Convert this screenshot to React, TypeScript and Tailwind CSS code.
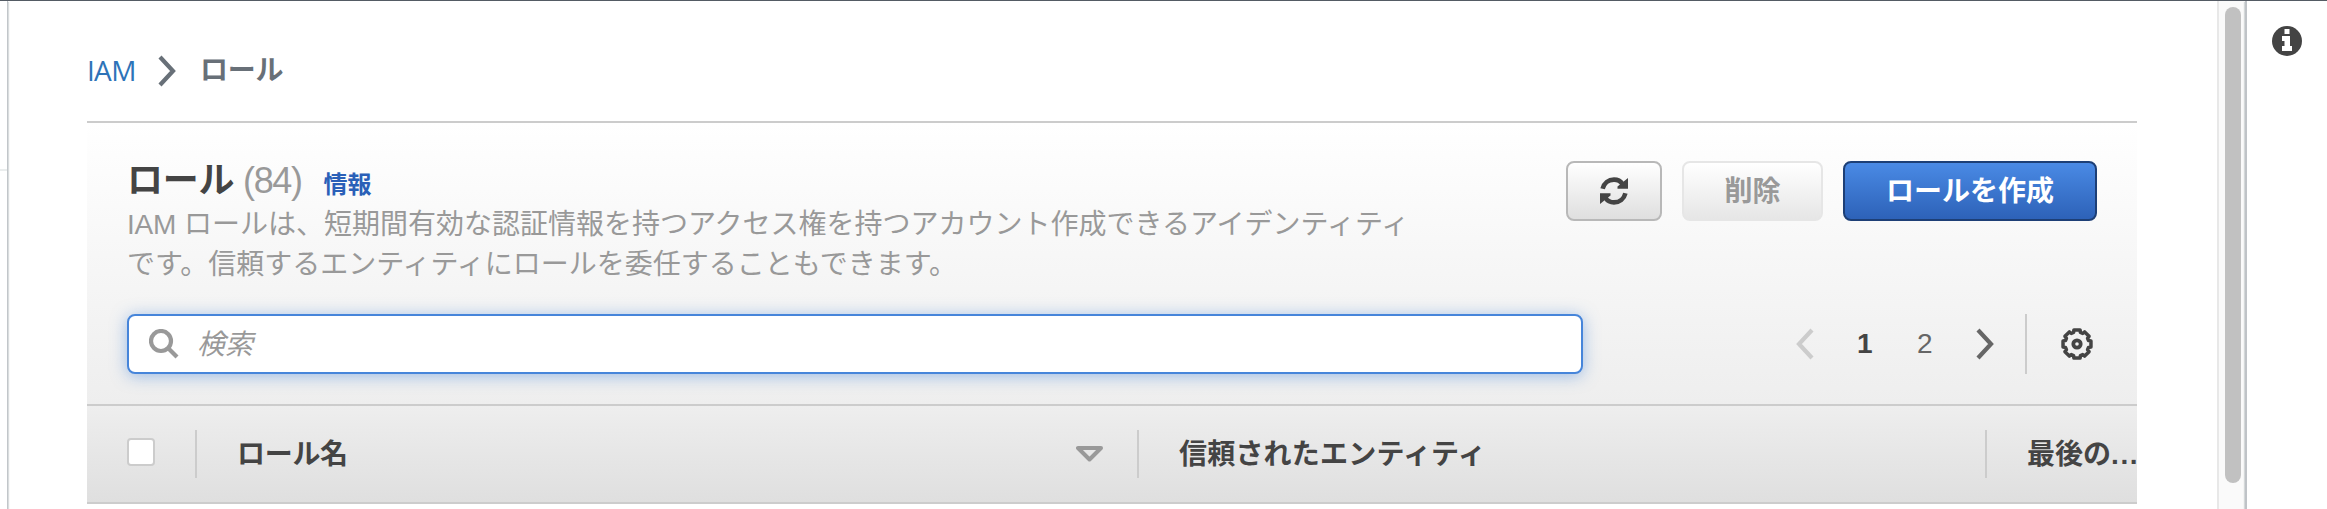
import React from "react";

const uiFont = "font-['Liberation_Sans','Noto_Sans_CJK_JP',sans-serif]";

function RefreshIcon() {
  return (
    <svg className="h-7 w-7" viewBox="0 0 28 28" fill="none" stroke="#444" strokeWidth="4.6">
      <path d="M2.600 11.800C4 6 8.500 2.600 14 2.600C17.800 2.600 20.500 4 22.500 7" />
      <path d="M25.400 16.200C24 22 19.500 25.400 14 25.400C10.200 25.400 7.500 24 5.500 21" />
      <path d="M28 1V11.800H17.500V9.500L20 7.500z" fill="#444" stroke="none" />
      <path d="M0 27V16.200H10.500V18.500L8 20.500z" fill="#444" stroke="none" />
    </svg>
  );
}

function gearPath() {
  const points: string[] = [];
  const teeth = 8;
  const steps = [
    [-0.29, 12],
    [-0.22, 14.3],
    [0.22, 14.3],
    [0.29, 12],
  ];
  for (let i = 0; i < teeth; i++) {
    const base = (i / teeth) * Math.PI * 2;
    for (const [offset, r] of steps) {
      const a = base + offset;
      points.push(`${(16 + r * Math.sin(a)).toFixed(2)} ${(16 - r * Math.cos(a)).toFixed(2)}`);
    }
  }
  return `M${points.join("L")}Z`;
}

function GearIcon() {
  return (
    <svg className="h-8 w-8" viewBox="0 0 32 32" fill="none" stroke="#444" strokeWidth="3.5" strokeLinejoin="round">
      <path d={gearPath()} />
      <circle cx="16" cy="16" r="3.700" strokeWidth="3.8" />
    </svg>
  );
}

function Chevron({ dir, color }: { dir: "left" | "right"; color: string }) {
  return (
    <svg className="h-8 w-[18px] shrink-0" viewBox="0 0 18 32" fill="none" stroke={color} strokeWidth="4.2">
      <path d={dir === "right" ? "M2 2L15 16L2 30" : "M16 2L3 16L16 30"} />
    </svg>
  );
}

export default function App() {
  return (
    <div className={`flex h-[509px] w-[2327px] flex-col overflow-hidden bg-white text-[28px] text-[#444] ${uiFont}`}>
      <div className="h-px shrink-0 bg-[#545b64]" />
      <div className="flex min-h-0 flex-1">
        <aside className="w-2 shrink-0 border-r border-[#c2c6ca] pt-[168px] shadow-[1px_1px_1px_rgba(0,28,36,0.15)]">
          <div className="h-0.5 bg-[#eaeded]" />
        </aside>

        <main className="flex w-[2209px] shrink-0 flex-col pl-[79px] pr-20">
          <nav className="flex h-[120px] shrink-0 items-center pt-[19px] leading-none text-[#687078]">
            <a className="w-[71px] pb-px font-['Open_Sans','Noto_Sans_CJK_JP',sans-serif] tracking-[-0.7px] text-[#2e73b8]">IAM</a>
            <div className="flex w-[42px]">
              <Chevron dir="right" color="#687078" />
            </div>
            <span className="pt-px font-bold tracking-[-0.2px]">ロール</span>
          </nav>

          <section className="flex flex-col">
            <div className="flex h-[285px] flex-col border-y-2 border-[#ccc] bg-gradient-to-b from-white to-[#eee] px-10">
              <div className="flex h-[191px] justify-between pt-[38px]">
                <div className="-mt-0.5 w-[1310px]">
                  <h1 className="flex h-[46px] items-baseline text-[36px] leading-[44px]">
                    <span className="font-bold tracking-[-0.3px]">ロール</span>
                    <span className="ml-[9px] tracking-[-1.4px] text-[#999]">(84)</span>
                    <a className="ml-[22px] pt-px text-[24px] font-bold text-[#2a60b8]">情報</a>
                  </h1>
                  <p className="text-[28px] leading-10 text-[#999]">
                    <span className="tracking-[-0.2px]">IAM</span> ロールは、短期間有効な認証情報を持つアクセス権を持つアカウント作成できるアイデンティティ
                    <br />
                    です。信頼するエンティティにロールを委任することもできます。
                  </p>
                </div>
                <div className="flex h-[60px] gap-5 font-bold">
                  <button className="flex w-24 items-center justify-center rounded-lg border-2 border-[#b8b8b8] bg-gradient-to-b from-white to-[#dfdfdf]">
                    <RefreshIcon />
                  </button>
                  <button className="w-[141px] rounded-lg border-2 border-[#e6e6e6] bg-gradient-to-b from-white to-[#e6e6e6] pt-0.5 leading-none text-[#999]">
                    削除
                  </button>
                  <button className="w-[254px] rounded-lg border-2 border-[#1d3f76] bg-gradient-to-b from-[#4a8ae5] to-[#2d62b8] pt-0.5 leading-none text-white">
                    ロールを作成
                  </button>
                </div>
              </div>

              <div className="flex h-[60px] items-center">
                <div className="flex h-[60px] w-[1456px] items-center rounded-lg border-2 border-[#4685da] bg-white pl-5 shadow-[0_2px_16px_rgba(70,133,218,0.5)]">
                  <svg className="h-[30px] w-[30px]" viewBox="0 0 30 30" fill="none" stroke="#999" strokeWidth="4.2">
                    <circle cx="12" cy="12" r="10" />
                    <path d="M19 19L28 28" />
                  </svg>
                  <span className="ml-[18px] pt-0.5 italic leading-none text-[#999]">検索</span>
                </div>
                <div className="ml-[213px] flex h-full items-center">
                  <Chevron dir="left" color="#ccc" />
                  <span className="ml-[43px] w-4 font-bold leading-none">1</span>
                  <span className="ml-[44px] w-4 leading-none text-[#666]">2</span>
                  <span className="ml-[43px] flex">
                    <Chevron dir="right" color="#666" />
                  </span>
                  <span className="ml-[31px] mr-[34px] h-full w-0.5 bg-[#ccc]" />
                  <GearIcon />
                </div>
              </div>
            </div>

            <div className="flex h-[98px] items-center overflow-hidden border-b-2 border-[#ccc] bg-gradient-to-b from-[#eee] to-[#dfdfdf] pl-10 font-bold leading-none">
              <span className="mb-1 h-7 w-7 shrink-0 rounded-[4px] border-2 border-[#ccc] bg-white" />
              <span className="ml-10 h-12 w-0.5 shrink-0 bg-[#ccc]" />
              <div className="flex w-[940px] shrink-0 items-center justify-between pl-10 pr-[34px]">
                <span className="pt-px tracking-[-0.3px]">ロール名</span>
                <svg className="h-4 w-[27px]" viewBox="0 0 27 16" fill="none" stroke="#999" strokeWidth="4" strokeLinejoin="round">
                  <path d="M2 2H25L13.500 13.500Z" />
                </svg>
              </div>
              <span className="h-12 w-0.5 shrink-0 bg-[#ccc]" />
              <span className="w-[846px] shrink-0 pl-10 pt-px tracking-[0.2px]">信頼されたエンティティ</span>
              <span className="h-12 w-0.5 shrink-0 bg-[#ccc]" />
              <span className="shrink-0 pl-10 pt-px">
                最後の<span className="tracking-[1.600px]">...</span>
              </span>
            </div>
          </section>
        </main>

        <div className="w-[28px] shrink-0 border-l-2 border-[#e8e8e8] bg-[#fafafa] pl-1.5 pt-1.5">
          <div className="h-[476px] w-4 rounded-full bg-[#c1c1c1]" />
        </div>
        <aside className="flex flex-1 justify-end border-l-2 border-[#bfc3c7] bg-white pr-[25px] pt-[25px] shadow-[-1px_1px_1px_rgba(0,28,36,0.15)]">
          <svg className="h-[30px] w-[30px]" viewBox="0 0 30 30">
            <circle cx="15" cy="15" r="15" fill="#444" />
            <path fill="#fff" d="M12.500 3H17.500V8H12.500ZM10 10H18V20H20V25H10V20H12.500V15H10Z" />
          </svg>
        </aside>
      </div>
    </div>
  );
}
